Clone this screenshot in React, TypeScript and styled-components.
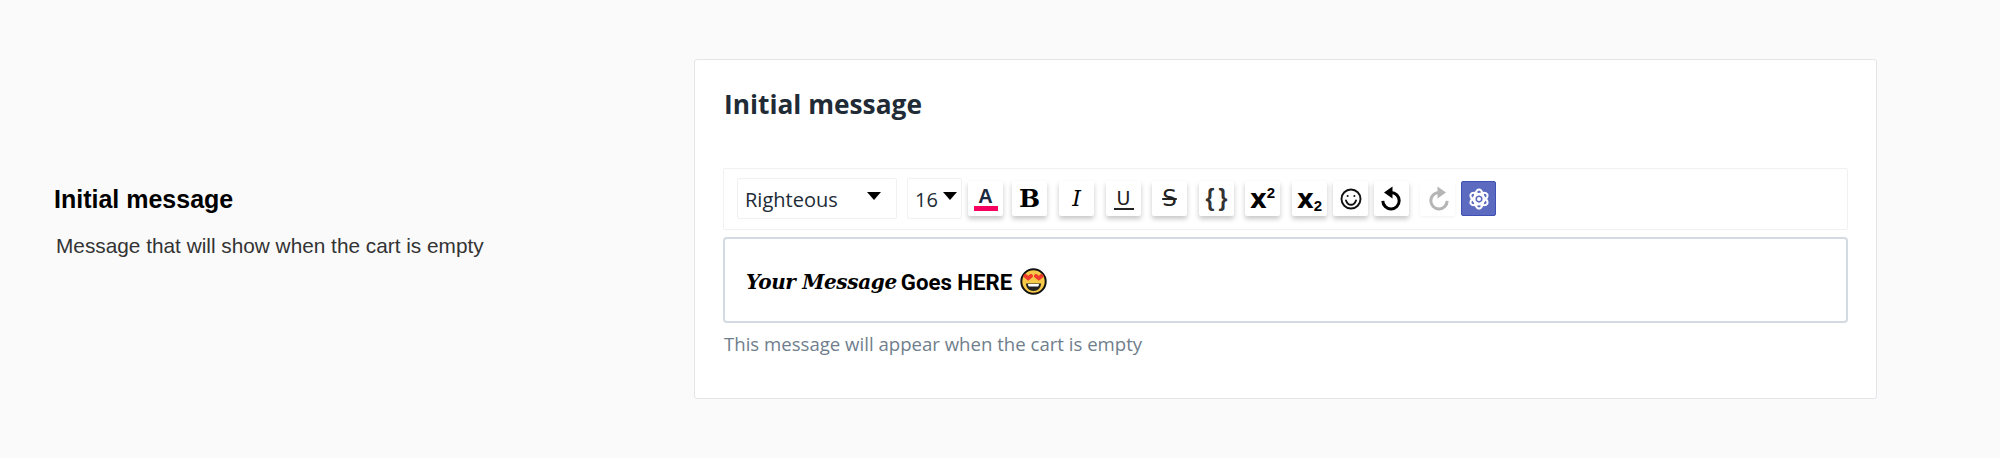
import React from "react";
import styled, { createGlobalStyle } from "styled-components";

const Global = createGlobalStyle`
  html, body { margin: 0; padding: 0; background: #fafafa; }
  * { box-sizing: border-box; }
`;

const Page = styled.main`
  display: flex;
  align-items: center;
  width: 2000px;
  height: 458px;
  padding: 0 123px 1px 55px;
  background: #fafafa;
`;

const Intro = styled.section`
  width: 639px;
  flex: none;
  margin-top: -13px;
  font-family: "Liberation Sans", Arial, sans-serif;
`;

const IntroTitle = styled.h2`
  margin: 0 0 20px -1px;
  font-size: 25px;
  line-height: 28px;
  font-weight: 700;
  color: #000;
`;

const IntroText = styled.p`
  margin: 0 0 0 1px;
  font-size: 20.8px;
  line-height: 26px;
  color: #333;
`;

const Card = styled.section`
  flex: 1;
  height: 340px;
  padding: 20px 28px 0;
  background: #fff;
  border: 1px solid #e3e5e8;
  border-radius: 3px;
`;

const CardTitle = styled.h3`
  margin: 1px 0 40px 1px;
  height: 47px;
  font-family: "Open Sans", "Noto Sans", sans-serif;
  font-size: 26.3px;
  line-height: 47px;
  font-weight: 700;
  color: #212b36;
`;

const Toolbar = styled.div`
  display: flex;
  align-items: center;
  height: 62px;
  padding-left: 13px;
  background: #fff;
  border: 1px solid #f1f1f1;
  border-radius: 2px;
`;

const Select = styled.div<{ $w: number; $ml: number; $gap: number }>`
  display: flex;
  align-items: center;
  justify-content: space-between;
  width: ${(p) => p.$w}px;
  height: 41px;
  margin-left: ${(p) => p.$ml}px;
  padding: 2px ${(p) => p.$gap}px 0 7px;
  border: 1px solid #f1f1f1;
  border-radius: 2px;
  font-family: "Open Sans", "Noto Sans", sans-serif;
  font-size: 20px;
  color: #212b36;
`;

const Caret = styled.span`
  width: 0;
  height: 0;
  margin-top: -7px;
  border-left: 7.5px solid transparent;
  border-right: 7.5px solid transparent;
  border-top: 8px solid #000;
`;

const Btn = styled.button<{ $ml: number; $active?: boolean; $faded?: boolean }>`
  display: flex;
  align-items: center;
  justify-content: center;
  flex: none;
  position: relative;
  width: 35px;
  height: 35px;
  margin-left: ${(p) => p.$ml}px;
  padding: 0;
  border: ${(p) => (p.$active ? "1px solid #3f51b5" : "none")};
  border-radius: 2px;
  background: ${(p) => (p.$active ? "#5c6bc0" : "#fff")};
  color: #000;
  box-shadow: ${(p) =>
    p.$active ? "none" : p.$faded ? "0 1px 3px rgba(0,0,0,.06)" : "0 3px 5px rgba(0,0,0,.22)"};
`;

const ColorA = styled.span`
  display: block;
  width: 24px;
  font-family: "Liberation Sans", sans-serif;
  font-weight: 700;
  font-size: 20px;
  line-height: 19px;
  text-align: center;
  color: #1a2a40;
  border-bottom: 5px solid #f5005f;
`;

const BoldGlyph = styled.span`
  font-family: "DejaVu Serif", serif;
  font-weight: 900;
  font-size: 25px;
  line-height: 1;
`;

const ItalicGlyph = styled.span`
  font-family: "DejaVu Serif", serif;
  font-style: italic;
  font-size: 22px;
  line-height: 1;
`;

const UnderGlyph = styled.span`
  display: block;
  width: 20px;
  font-family: "DejaVu Sans", sans-serif;
  font-size: 19px;
  line-height: 20px;
  text-align: center;
  color: #222;
  border-bottom: 2px solid #222;
`;

const StrikeGlyph = styled.span`
  font-family: "DejaVu Sans", sans-serif;
  font-size: 23px;
  line-height: 1;
  color: #222;
  text-decoration: line-through;
  text-decoration-thickness: 2px;
  padding: 0 2px;
`;

const BraceGlyph = styled.span`
  font-family: "Liberation Sans", sans-serif;
  font-weight: 700;
  font-size: 23px;
  letter-spacing: 4px;
  margin-right: -4px;
  color: #333;
`;

const ScriptGlyph = styled.span`
  font-family: "DejaVu Sans", sans-serif;
  font-weight: 700;
  font-size: 26px;
  line-height: 1;
  sup, sub {
    font-family: "Liberation Sans", sans-serif;
    font-size: 15px;
    line-height: 0;
  }
  sup { vertical-align: 10px; }
  sub { vertical-align: -3px; }
`;

const EditorBox = styled.div`
  display: flex;
  align-items: center;
  height: 86px;
  margin-top: 7px;
  padding: 4px 21px 0;
  background: #fff;
  border: 2px solid #d3dae1;
  border-radius: 4px;
  color: #000;
`;

const SlabItalic = styled.em`
  font-family: "DejaVu Serif", serif;
  font-weight: 700;
  font-style: italic;
  font-size: 20px;
  letter-spacing: -0.35px;
`;

const Plain = styled.span`
  margin-left: 4px;
  font-family: Roboto, sans-serif;
  font-weight: 700;
  font-size: 22.2px;
`;

const Emoji = styled.svg`
  margin-left: 8px;
  margin-top: -1px;
  flex: none;
`;

const Hint = styled.p`
  margin: 9px 0 0 1px;
  font-family: "Open Sans", "Noto Sans", sans-serif;
  font-size: 18.6px;
  line-height: 24px;
  color: #6f7e8c;
`;

const Undo = ({ color, flip }: { color: string; flip?: boolean }) => (
  <svg width="24" height="26" viewBox="0 0 24 26" style={flip ? { transform: "scaleX(-1)" } : undefined}>
    <path d="M11 6.5a8.2 8.2 0 1 1-8.2 8.4" fill="none" stroke={color} strokeWidth="3" />
    <path d="M12.5 0.5v12L4 6.5z" fill={color} />
  </svg>
);

export default function App() {
  return (
    <Page>
      <Global />
      <Intro>
        <IntroTitle>Initial message</IntroTitle>
        <IntroText>Message that will show when the cart is empty</IntroText>
      </Intro>
      <Card>
        <CardTitle>Initial message</CardTitle>
        <Toolbar>
          <Select $w={160} $ml={0} $gap={15}>
            Righteous
            <Caret />
          </Select>
          <Select $w={55} $ml={10} $gap={4}>
            16
            <Caret />
          </Select>
          <Btn $ml={6}>
            <ColorA>A</ColorA>
          </Btn>
          <Btn $ml={9}>
            <BoldGlyph>B</BoldGlyph>
          </Btn>
          <Btn $ml={12}>
            <ItalicGlyph>I</ItalicGlyph>
          </Btn>
          <Btn $ml={12}>
            <UnderGlyph>U</UnderGlyph>
          </Btn>
          <Btn $ml={11}>
            <StrikeGlyph>S</StrikeGlyph>
          </Btn>
          <Btn $ml={12}>
            <BraceGlyph>{"{}"}</BraceGlyph>
          </Btn>
          <Btn $ml={11}>
            <ScriptGlyph>
              x<sup>2</sup>
            </ScriptGlyph>
          </Btn>
          <Btn $ml={12}>
            <ScriptGlyph>
              x<sub>2</sub>
            </ScriptGlyph>
          </Btn>
          <Btn $ml={6}>
            <svg width="22" height="22" viewBox="0 0 22 22" fill="none" stroke="#111" strokeWidth="1.9">
              <circle cx="11" cy="11" r="9.5" />
              <path d="M6 12.5c1 3 3 4.3 5 4.3s4-1.3 5-4.3" strokeLinecap="round" />
              <circle cx="7.6" cy="8" r="1" fill="#111" stroke="none" />
              <circle cx="14.4" cy="8" r="1" fill="#111" stroke="none" />
            </svg>
          </Btn>
          <Btn $ml={6}>
            <Undo color="#000" />
          </Btn>
          <Btn $ml={11} $faded>
            <Undo color="#b5b5b5" flip />
          </Btn>
          <Btn $ml={6} $active>
            <svg width="20" height="22" viewBox="0 0 20 22" fill="none" stroke="#fff" strokeWidth="2">
              <ellipse cx="10" cy="11" rx="4.5" ry="9.5" />
              <ellipse cx="10" cy="11" rx="4.5" ry="9.5" transform="rotate(60 10 11)" />
              <ellipse cx="10" cy="11" rx="4.5" ry="9.5" transform="rotate(120 10 11)" />
              <circle cx="10" cy="11" r="2" fill="#fff" stroke="none" />
            </svg>
          </Btn>
        </Toolbar>
        <EditorBox>
          <SlabItalic>Your Message</SlabItalic>
          <Plain>Goes HERE</Plain>
          <Emoji width="27" height="27" viewBox="0 0 27 27">
            <circle cx="13.5" cy="13.5" r="12.2" fill="#f7c948" stroke="#111" strokeWidth="2" />
            <path d="M6 15.5h15c0 4.5-3.2 7.5-7.5 7.5S6 20 6 15.5z" fill="#222" />
            <path d="M8 16h11c0 1.4-.6 2.2-1 2.4H9c-.4-.2-1-1-1-2.4z" fill="#fff" />
            <path d="M8.2 12.8 3.9 9.3c-1.7-2 1.4-4.7 3.2-2.5l1.1 1.3 1.1-1.3c1.8-2.2 4.9.5 3.2 2.5z" fill="#ee3b2b" />
            <path d="M18.8 12.8l-4.3-3.5c-1.7-2 1.4-4.7 3.2-2.5l1.1 1.3 1.1-1.3c1.8-2.2 4.9.5 3.2 2.5z" fill="#ee3b2b" />
          </Emoji>
        </EditorBox>
        <Hint>This message will appear when the cart is empty</Hint>
      </Card>
    </Page>
  );
}
